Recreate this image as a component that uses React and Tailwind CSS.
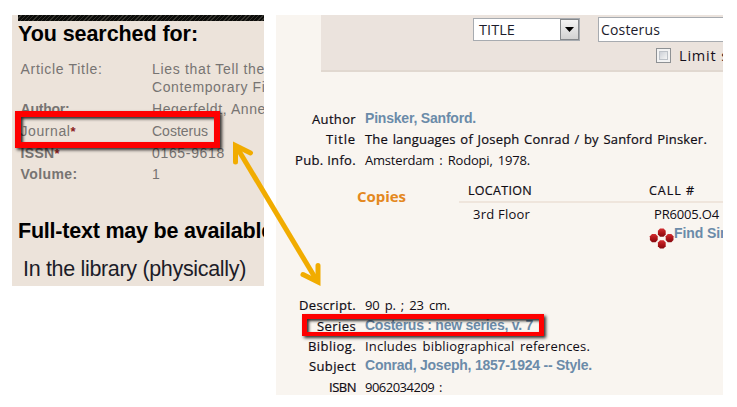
import { useLayoutEffect, useRef, useState } from "react";

// A single line of text whose tracking is computed so that it spans `w` pixels.
function Fit({ w, className = "", children }) {
  const ref = useRef(null);
  const [gap, setGap] = useState(0);
  useLayoutEffect(() => {
    const natural = ref.current.getBoundingClientRect().width;
    setGap((w - natural) / Math.max(1, ref.current.textContent.length));
  }, []);
  return (
    <span ref={ref} className={`inline-block whitespace-pre ${className}`} style={{ letterSpacing: `${gap}px` }}>
      {children}
    </span>
  );
}

function SearchRow({ label, labelWidth, bold, star, children, className }) {
  return (
    <div className={`flex shrink-0 leading-[18px] ${className}`}>
      <div className="w-[131.5px] shrink-0">
        <Fit w={labelWidth} className={bold ? "font-bold" : ""}>{label}</Fit>
        {star && <span className="text-[13px] font-bold text-[#8a2020]">*</span>}
      </div>
      <div className="flex flex-col items-start">{children}</div>
    </div>
  );
}

function SearchPanel() {
  return (
    <section className="flex h-[271px] w-[252px] shrink-0 flex-col overflow-hidden bg-[#ece3da] font-['Liberation_Sans',sans-serif] text-[14px] text-[#777472]">
      <div className="ml-1.5 h-[6px] shrink-0 bg-[repeating-linear-gradient(135deg,#0c0c0a_0px,#0c0c0a_2px,#34332d_2px,#34332d_3px)]" />
      <h1 className="ml-1.5 h-[39px] shrink-0 text-[21.5px] leading-[26px] font-bold text-black">
        <Fit w={180}>You searched for:</Fit>
      </h1>
      <div className="flex h-[156px] shrink-0 flex-col pl-[8.5px]">
        <SearchRow label="Article Title:" labelWidth={82} className="h-[39.5px]">
          <Fit w={113}>Lies that Tell the</Fit>
          <Fit w={121}>Contemporary Fic</Fit>
        </SearchRow>
        <SearchRow label="Author:" labelWidth={49} bold className="h-[22px]">
          <Fit w={114}>Hegerfeldt, Anne</Fit>
        </SearchRow>
        <SearchRow label="Journal" labelWidth={50} star className="h-[22px]">
          <Fit w={56}>Costerus</Fit>
        </SearchRow>
        <SearchRow label="ISSN" labelWidth={34} bold star className="h-[21px]">
          <Fit w={73}>0165-9618</Fit>
        </SearchRow>
        <SearchRow label="Volume:" labelWidth={57} bold className="h-[22px]">1</SearchRow>
      </div>
      <h2 className="mt-[2px] ml-1.5 h-[38px] shrink-0 text-[21.5px] leading-[26px] font-bold text-black">
        <Fit w={255}>Full-text may be available</Fit>
      </h2>
      <p className="ml-[11px] text-[21.5px] leading-[26px] text-[#1c1c28]">
        <Fit w={223}>In the library (physically)</Fit>
      </p>
    </section>
  );
}

const linkClass = "font-['Liberation_Sans',sans-serif] font-bold text-[#6b8ba9]";
const heavy = "[-webkit-text-stroke:0.2px]";

function RecordRow({ label, labelWidth, width, link, strong, children }) {
  return (
    <div className="flex h-[20.4px] shrink-0 items-start leading-5">
      <div className={`mr-[9px] flex w-[80px] shrink-0 justify-end ${heavy}`}>
        <Fit w={labelWidth}>{label}</Fit>
      </div>
      <Fit w={width} className={link ? `-mt-px text-[14px] ${linkClass}` : strong ? `[word-spacing:1px] ${heavy}` : "[word-spacing:2px]"}>
        {children}
      </Fit>
    </div>
  );
}

function Dots() {
  return (
    <svg className="mt-[5px] h-[22px] w-[25px] shrink-0" viewBox="0 0 25 22">
      <defs>
        <linearGradient id="dot" x1="0" y1="0" x2="0" y2="1">
          <stop offset="0" stopColor="#d22f32" />
          <stop offset="0.5" stopColor="#b01519" />
          <stop offset="1" stopColor="#860a10" />
        </linearGradient>
      </defs>
      {[[12.8, 4.6], [4.8, 10.1], [20.6, 10.1], [12.8, 16.4]].map(([x, y]) => (
        <polygon
          key={`${x}-${y}`}
          fill="url(#dot)"
          transform={`translate(${x} ${y})`}
          points="-1.8,-4.2 1.8,-4.2 3.9,-1.8 3.9,1.8 1.8,4.1 -1.8,4.1 -3.9,1.8 -3.9,-1.8"
        />
      ))}
    </svg>
  );
}

function SearchForm() {
  return (
    <div className="ml-[45px] flex h-[57px] shrink-0 flex-col overflow-hidden border-b-2 border-[#e1d8d0] bg-[#ebe3dd]">
      <div className="mt-[2px] ml-[152px] flex shrink-0 items-start">
        <div className="mt-px flex h-[23px] w-[107px] shrink-0 items-center justify-between border border-[#a7abb0] bg-white pl-[5px] text-[14.5px] text-[#1c1c2c]">
          <Fit w={36}>TITLE</Fit>
          <div className="flex h-[21px] w-[19px] items-center justify-center border border-[#85888b] bg-gradient-to-b from-[#f4f4f4] to-[#d2d2d2]">
            <svg className="h-[5px] w-[9px]" viewBox="0 0 9 5"><path d="M0 0h9L4.5 5z" fill="#000" /></svg>
          </div>
        </div>
        <div className="ml-[18px] h-[25px] w-[140px] shrink-0 border border-[#a7abb0] bg-white pl-[2px] text-[14px] leading-[24px] text-[#1c1c2c]">
          <Fit w={59}>Costerus</Fit>
        </div>
      </div>
      <div className="mt-[3px] ml-[335px] flex shrink-0 items-center">
        <div className="flex h-[15px] w-[15px] shrink-0 items-center justify-center border border-[#8e9194] bg-[#f3f3f3]">
          <div className="h-[9px] w-[9px] border border-[#bdc2c8] bg-gradient-to-br from-[#cdd1d7] to-[#f5f5f5]" />
        </div>
        <span className="ml-[8px] pt-px text-[14.5px] leading-5 text-[#15101c]"><Fit w={92}>Limit search</Fit></span>
      </div>
    </div>
  );
}

function CatalogPanel() {
  return (
    <section className="flex h-[380px] w-[447px] shrink-0 flex-col overflow-hidden bg-[#f9f5f0] font-['Open_Sans',sans-serif] text-[13px] text-[#100c14]">
      <SearchForm />
      <div className="mt-[37px] flex shrink-0 flex-col">
        <RecordRow label="Author" labelWidth={44} width={111} link>Pinsker, Sanford.</RecordRow>
        <RecordRow label="Title" labelWidth={30} width={342} strong>The languages of Joseph Conrad / by Sanford Pinsker.</RecordRow>
        <RecordRow label="Pub. Info." labelWidth={61} width={165}>Amsterdam : Rodopi, 1978.</RecordRow>
      </div>
      <div className="mt-[10px] flex shrink-0">
        <div className="w-[183px] shrink-0 pt-[6px] pl-[81px] text-[15px] leading-5 font-bold text-[#e48820]">
          <Fit w={49}>Copies</Fit>
        </div>
        <div className="flex w-[264px] shrink-0 flex-col">
          <div className={`flex h-[23px] border-b-2 border-[#efe5dc] pt-px pl-[9px] text-[12.5px] leading-5 ${heavy}`}>
            <div className="w-[181px] shrink-0"><Fit w={64}>LOCATION</Fit></div>
            <Fit w={46}>CALL #</Fit>
          </div>
          <div className="flex h-[20px] pt-px pl-[14px] leading-5">
            <div className="w-[181px] shrink-0"><Fit w={57}>3rd Floor</Fit></div>
            <Fit w={65}>PR6005.O4</Fit>
          </div>
          <div className="flex pl-[190px]">
            <Dots />
            <Fit w={79} className={`text-[14px] leading-5 ${linkClass}`}>Find Similar</Fit>
          </div>
        </div>
      </div>
      <div className="mt-[45px] flex shrink-0 flex-col">
        <RecordRow label="Descript." labelWidth={57} width={85}>90 p. ; 23 cm.</RecordRow>
        <RecordRow label="Series" labelWidth={39} width={168} link>Costerus : new series, v. 7</RecordRow>
        <RecordRow label="Bibliog." labelWidth={48} width={225}>Includes bibliographical references.</RecordRow>
        <RecordRow label="Subject" labelWidth={47} width={227} link>Conrad, Joseph, 1857-1924 -- Style.</RecordRow>
        <RecordRow label="ISBN" labelWidth={27} width={77}>9062034209 :</RecordRow>
      </div>
    </section>
  );
}

const highlight = "absolute border-[#fe0000] shadow-[2px_2px_3px_rgba(0,0,0,0.8),inset_2px_2px_3px_rgba(0,0,0,0.8)]";

export default function App() {
  return (
    <main className="relative flex h-[407px] w-[737px] items-start gap-3 overflow-hidden bg-white pt-[15px] pl-3">
      <SearchPanel />
      <CatalogPanel />
      <div className={`${highlight} top-[111px] left-[15px] h-[37px] w-[205px] border-[6px]`} />
      <div className={`${highlight} top-[314px] left-[302px] h-[22px] w-[242px] border-x-[5px] border-t-[5px] border-b-[4px]`} />
      <svg className="absolute top-0 left-0 h-[407px] w-[737px]" viewBox="0 0 737 407" fill="none" stroke="#f1ac00" strokeWidth="5">
        <path d="M236 146 316.5 280" />
        <path d="M235.5 162V145.5L250.5 153" strokeLinecap="round" />
        <path d="M303 274.5 318 282V265.500" strokeLinecap="round" />
      </svg>
    </main>
  );
}
